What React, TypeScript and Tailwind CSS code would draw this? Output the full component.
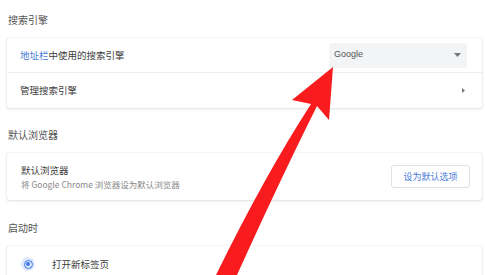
import React from 'react'

const font = { fontFamily: '"Noto Sans CJK SC", "Noto Sans", sans-serif' }

function Card({ children }: { children: React.ReactNode }) {
  return (
    <div className="bg-white rounded-[2px] shadow-[0_0_1px_rgba(60,64,67,0.3),0_1px_3px_rgba(60,64,67,0.14)]">
      {children}
    </div>
  )
}

function SectionTitle({ children }: { children: React.ReactNode }) {
  return <div className="text-[10px] leading-[14px] text-[#555] pl-[1px]">{children}</div>
}

export default function App() {
  return (
    <div className="relative w-[485px] h-[275px] overflow-hidden bg-white text-[#3c3c3c]" style={font}>
      <div className="pl-[7px] pr-[3px] pt-[13px] flex flex-col">
        <SectionTitle>搜索引擎</SectionTitle>

        <div className="mt-[11px]">
          <Card>
            <div className="h-[34px] flex items-center pl-[13px] pr-[15px]">
              <div className="flex-1 text-[9.5px]">
                <span className="text-[#4a7bd9]">地址栏</span>中使用的搜索引擎
              </div>
              <div className="w-[138px] h-[25px] bg-[#f3f4f5] rounded-[3px] flex items-center justify-between pl-[5px] pr-[6px]">
                <span className="text-[9px] text-[#555]" style={{ fontFamily: '"Liberation Sans", Arial, sans-serif' }}>Google</span>
                <svg width="7" height="4" viewBox="0 0 7 4"><path d="M0 0 L7 0 L3.5 4 Z" fill="#777" /></svg>
              </div>
            </div>
            <div className="h-px bg-[#eeeeee]" />
            <div className="h-[35px] flex items-center pl-[13px] pr-[17px]">
              <div className="flex-1 text-[9.5px]">管理搜索引擎</div>
              <svg width="3" height="5" viewBox="0 0 3 5"><path d="M0 0 L3 2.5 L0 5 Z" fill="#777" /></svg>
            </div>
          </Card>
        </div>

        <div className="mt-[20px]">
          <SectionTitle>默认浏览器</SectionTitle>
        </div>

        <div className="mt-[11px]">
          <Card>
            <div className="h-[47px] flex items-center pl-[14px] pr-[12px]">
              <div className="flex-1 flex flex-col">
                <div className="text-[9.5px] leading-[14px]">默认浏览器</div>
                <div className="text-[8.5px] leading-[13px] text-[#8a8a8a] mt-[1px]">将 Google Chrome 浏览器设为默认浏览器</div>
              </div>
              <div className="w-[79px] h-[23px] border border-[#e0e2e6] rounded-[3px] flex items-center justify-center text-[9px] text-[#4a7bd9]">
                设为默认选项
              </div>
            </div>
          </Card>
        </div>

        <div className="mt-[21px]">
          <SectionTitle>启动时</SectionTitle>
        </div>

        <div className="mt-[11px]">
          <Card>
            <div className="h-[36px] flex items-center pl-[14px]">
              <div className="w-[14px] h-[14px] rounded-full bg-[#dfe8fb] flex items-center justify-center">
                <div className="w-[9px] h-[9px] rounded-full border-[1.5px] border-[#3b78e7] flex items-center justify-center">
                  <div className="w-[4px] h-[4px] rounded-full bg-[#3b78e7]" />
                </div>
              </div>
              <div className="ml-[17px] text-[9.5px]">打开新标签页</div>
            </div>
          </Card>
        </div>
      </div>

      <svg className="absolute inset-0 pointer-events-none" width="485" height="275" viewBox="0 0 485 275">
        <path
          d="M333 67 L329 120 L317 106 Q280 180 237 275 L216 275 Q265 175 311 104 L292 100 Z"
          fill="#f81c1f"
        />
      </svg>
    </div>
  )
}
